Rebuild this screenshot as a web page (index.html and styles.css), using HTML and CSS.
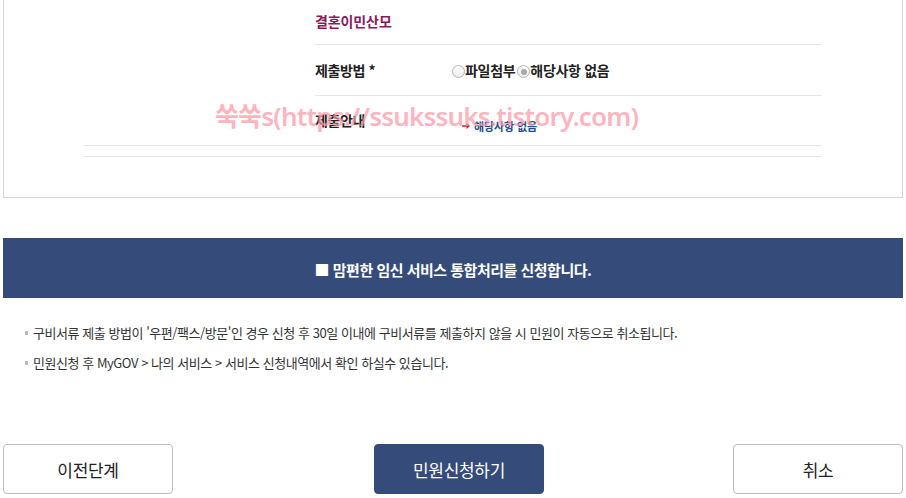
FILE: index.html
```html
<!DOCTYPE html>
<html lang="ko">
<head>
<meta charset="utf-8">
<link rel="stylesheet" href="styles.css">
</head>
<body>
<div class="page">
  <div class="box">
    <div class="outer">
      <div class="outer-row">
        <div class="outer-left"></div>
        <div class="inner">
          <div class="row r1">
            <div class="title">결혼이민산모</div>
          </div>
          <div class="row r2">
            <div class="label">제출방법 *</div>
            <div class="value">
              <span class="radio"></span><span class="opt">파일첨부</span>
              <span class="radio checked"></span><span class="opt">해당사항 없음</span>
            </div>
          </div>
          <div class="row r3">
            <div class="label">제출안내</div>
            <div class="value small">
              <svg class="arrow" width="8" height="6" viewBox="0 0 8 6"><path d="M0 2.2h4.5V0L8 3 4.5 6V3.8H0z" fill="#d0202a"/></svg>
              <span class="guide">해당사항 없음</span>
            </div>
          </div>
        </div>
      </div>
      <div class="outer-row empty"></div>
    </div>
    <div class="watermark">쑥쑥s(https://ssukssuks.tistory.com)</div>
  </div>

  <div class="banner">■ 맘편한 임신 서비스 통합처리를 신청합니다.</div>

  <ul class="notes">
    <li>구비서류 제출 방법이 '우편/팩스/방문'인 경우 신청 후 30일 이내에 구비서류를 제출하지 않을 시 민원이 자동으로 취소됩니다.</li>
    <li>민원신청 후 MyGOV &gt; 나의 서비스 &gt; 서비스 신청내역에서 확인 하실수 있습니다.</li>
  </ul>

  <div class="buttons">
    <button class="btn">이전단계</button>
    <button class="btn primary">민원신청하기</button>
    <button class="btn">취소</button>
  </div>
</div>
</body>
</html>
```

FILE: styles.css
```css
* { box-sizing: border-box; }
html, body { margin: 0; padding: 0; background: #fff; }
body {
  font-family: "Noto Sans CJK KR", "Noto Sans", sans-serif;
  color: #222;
}
.page {
  width: 900px;
  margin-left: 3px;
}
.box {
  position: relative;
  border: 1px solid #d6d6d6;
  border-top: none;
  height: 198px;
  padding-left: 80px;
}
.outer {
  width: 738px;
}
.outer-row {
  display: flex;
  border-bottom: 1px solid #e6e6e6;
}
.outer-row.empty { height: 11px; }
.outer-left { width: 231px; flex: none; }
.inner { flex: 1; }
.row {
  display: flex;
  align-items: center;
  border-bottom: 1px solid #e6e6e6;
}
.row:last-child { border-bottom: none; }
.r1 { height: 45px; padding-bottom: 2px; }
.r2 { height: 51px; }
.r3 { height: 49px; align-items: flex-start; }
.title {
  color: #8a1a5c;
  font-size: 14px;
  font-weight: 700;
  letter-spacing: -0.1px;
}
.label {
  width: 137px;
  flex: none;
  font-size: 14px;
  font-weight: 700;
  letter-spacing: -0.4px;
  color: #222;
}
.r3 .label { padding-top: 14px; }
.value {
  display: flex;
  align-items: center;
  font-size: 14px;
  font-weight: 700;
  letter-spacing: -0.3px;
  color: #222;
}
.radio {
  width: 13px;
  height: 13px;
  border-radius: 50%;
  border: 1px solid #b5b5b5;
  background: linear-gradient(#fff, #ececec);
  margin-right: 0;
  margin-top: 3px;
  position: relative;
}
.radio.checked::after {
  content: "";
  position: absolute;
  left: 2.5px;
  top: 2.5px;
  width: 6px;
  height: 6px;
  border-radius: 50%;
  background: #a8a8a8;
}
.opt { margin-right: 2px; }
.value.small {
  padding-top: 22px;
  padding-left: 10px;
}
.arrow { margin-right: 4px; }
.guide {
  font-size: 11px;
  font-weight: 700;
  color: #1e4f8f;
  letter-spacing: -0.1px;
}
.watermark {
  position: absolute;
  left: 211px;
  top: 96px;
  font-family: "Noto Sans", "Noto Sans CJK KR", sans-serif;
  font-size: 26px;
  font-weight: 600;
  letter-spacing: -0.8px;
  color: rgba(255, 150, 165, 0.72);
  white-space: nowrap;
}
.banner {
  margin-top: 40px;
  height: 60px;
  background: #354c7b;
  color: #fff;
  display: flex;
  align-items: center;
  justify-content: center;
  font-size: 15px;
  font-weight: 700;
  letter-spacing: -0.5px;
  padding-top: 2px;
}
.notes {
  list-style: none;
  margin: 20px 0 0;
  padding: 0 0 0 30px;
}
.notes li {
  position: relative;
  height: 30px;
  line-height: 30px;
  font-size: 13px;
  letter-spacing: -0.45px;
  color: #333;
}
.notes li::before {
  content: "";
  position: absolute;
  left: -8px;
  top: 13px;
  width: 3px;
  height: 4px;
  background: #bbb;
}
.buttons {
  margin-top: 66px;
  display: flex;
  justify-content: space-between;
}
.btn {
  width: 170px;
  height: 50px;
  border: 1px solid #bdbdbd;
  border-radius: 4px;
  background: #fff;
  font-family: "Noto Sans CJK KR", sans-serif;
  font-size: 17px;
  letter-spacing: -0.3px;
  color: #222;
  padding: 0;
}
.btn.primary {
  margin-left: 12px;
  background: #354c7b;
  border-color: #354c7b;
  color: #fff;
}
```
